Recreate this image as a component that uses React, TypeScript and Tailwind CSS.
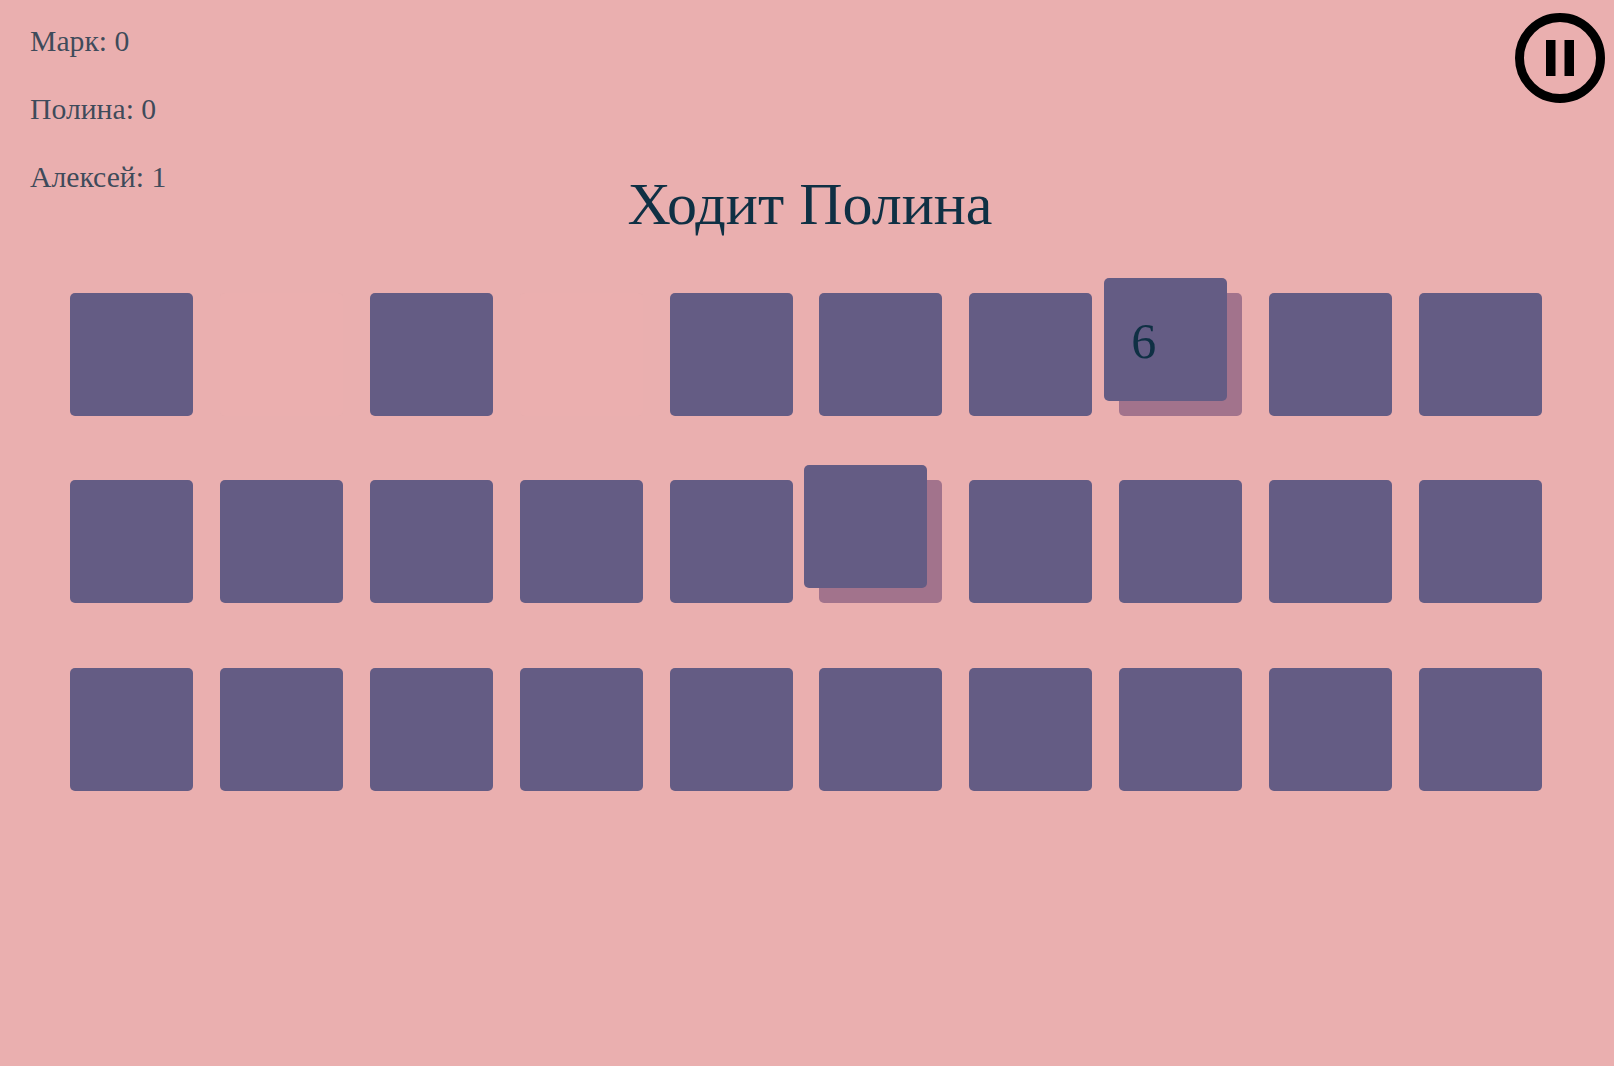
import * as React from "react";

type Slot = "card" | "gone" | "lifted";

const players = [
  { name: "Марк", score: 0 },
  { name: "Полина", score: 0 },
  { name: "Алексей", score: 1 },
];

// 3 rows of 10, only a few slots differ from a plain face-down card
const slotKind = (row: number, col: number): Slot => {
  if (row === 0 && (col === 1 || col === 3)) return "gone";
  if (row === 0 && col === 7) return "lifted";
  if (row === 1 && col === 5) return "lifted";
  return "card";
};

const PauseIcon: React.FC = () => (
  <svg width="90" height="90" viewBox="0 0 90 90" fill="none">
    <circle cx="45" cy="45" r="40.5" stroke="#000" strokeWidth="9" />
    <rect x="31" y="27" width="9.5" height="36" fill="#000" />
    <rect x="49.5" y="27" width="9.5" height="36" fill="#000" />
  </svg>
);

const Card: React.FC<{ kind: Slot; value?: number }> = ({ kind, value }) => {
  if (kind === "gone") {
    return <div className="h-[123px] w-[123px] rounded-[5px] bg-[#ebb0b0]/50" />;
  }
  if (kind === "lifted") {
    return (
      <div className="h-[123px] w-[123px] rounded-[5px] bg-[#a2738c]">
        <div className="flex h-[123px] w-[123px] -translate-x-[15px] -translate-y-[15px] items-center rounded-[5px] bg-[#645c84] pl-[27px] pt-[4px] text-[50px] leading-none text-[#0f3044]">
          {value}
        </div>
      </div>
    );
  }
  return <div className="h-[123px] w-[123px] rounded-[5px] bg-[#645c84]" />;
};

export default function App() {
  return (
    <div className="relative h-[1066px] overflow-hidden bg-[#eaafaf] font-['Liberation_Serif',serif]">
      <button className="absolute right-[9px] top-[13px]" aria-label="Пауза">
        <PauseIcon />
      </button>

      <div className="flex flex-col gap-[34px] pl-[30px] pt-[24px] text-[29.7px] leading-[34px] text-[#0f3044]/80">
        {players.map((p) => (
          <p key={p.name}>
            {p.name}: {p.score}
          </p>
        ))}
      </div>

      <h1 className="-mt-[24px] pl-[6px] text-center text-[60px] leading-[68px] text-[#0f3044]">
        Ходит Полина
      </h1>

      <div className="ml-[70px] mt-[54.6px] grid w-[1473px] grid-cols-[repeat(10,123px)] gap-x-[26.9px] gap-y-[64.5px]">
        {[0, 1, 2].map((row) =>
          Array.from({ length: 10 }, (_, col) => (
            <Card
              key={`${row}-${col}`}
              kind={slotKind(row, col)}
              value={row === 0 && col === 7 ? 6 : undefined}
            />
          ))
        )}
      </div>
    </div>
  );
}
